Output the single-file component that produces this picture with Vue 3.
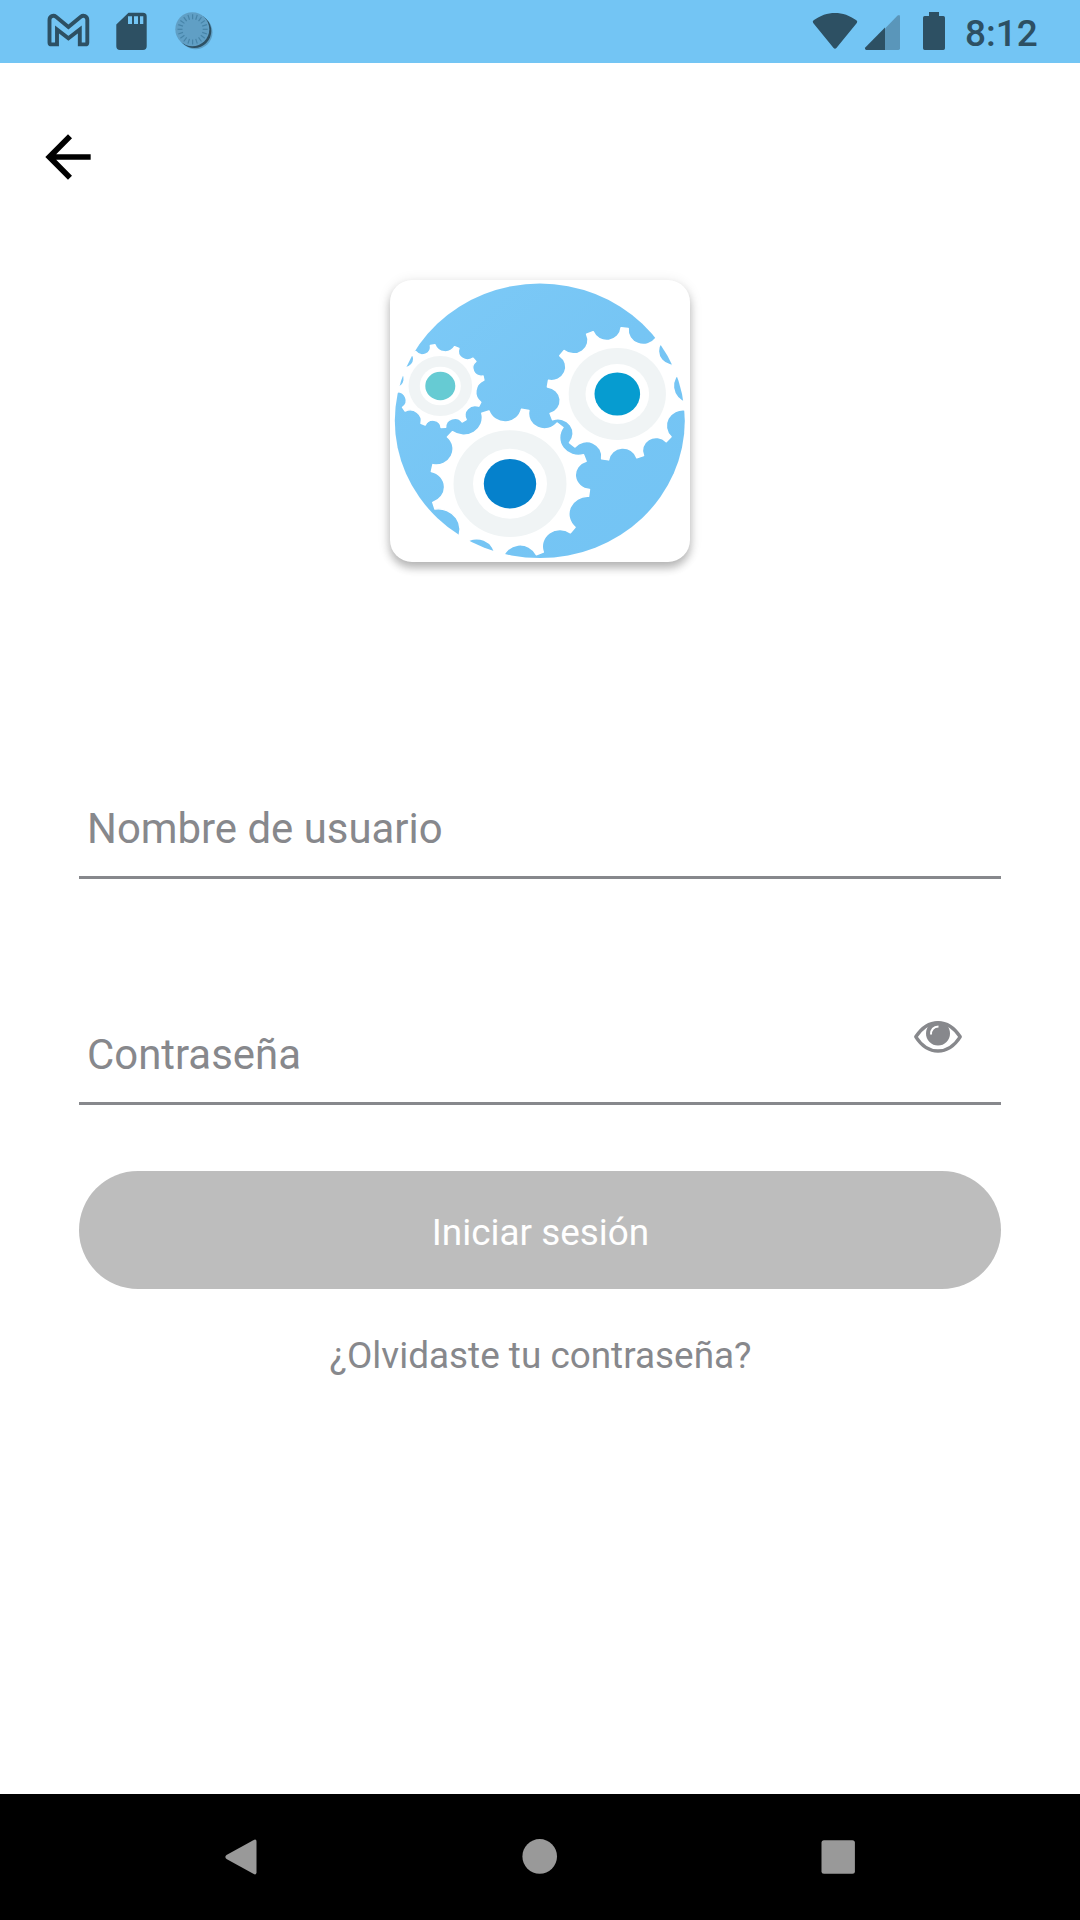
<script setup>
import { ref } from 'vue'

const username = ref('')
const password = ref('')
const showPassword = ref(false)

// Outline of a gear: flat tips at the given angles joined by concave arcs.
function gearPath(tips, radius, depth, half) {
  const at = (deg) => {
    const a = (deg * Math.PI) / 180
    return [radius * Math.cos(a), -radius * Math.sin(a)]
  }
  const sorted = [...tips].sort((a, b) => a - b)
  let d = ''
  sorted.forEach((tip, i) => {
    const next = i + 1 < sorted.length ? sorted[i + 1] : sorted[0] + 360
    const [x0, y0] = at(tip - half)
    const [x1, y1] = at(tip + half)
    const [x2, y2] = at(next - half)
    const chord = Math.hypot(x2 - x1, y2 - y1) / 2
    const r = (chord * chord + depth * depth) / (2 * depth)
    d += `${i ? 'L' : 'M'}${x0.toFixed(2)} ${y0.toFixed(2)}L${x1.toFixed(2)} ${y1.toFixed(2)}`
    d += `A${r.toFixed(2)} ${r.toFixed(2)} 0 0 1 ${x2.toFixed(2)} ${y2.toFixed(2)}`
  })
  return d + 'Z'
}

const gears = [
  {
    x: 440.3, y: 386, core: 15, hole: 20.5, ring: 31.8, color: '#66cbd3',
    path: gearPath([11, 39, 68, 100, 127, 156, 185, 214, 247, 274, 303, 334], 44, 6.5, 3),
  },
  {
    x: 617.3, y: 394, core: 22.8, hole: 31.8, ring: 48.6, color: '#069cd0',
    path: gearPath([24, 54, 84, 113, 142, 171, 200, 230, 260, 289, 317, 349], 70.3, 11.5, 2.9),
  },
  {
    x: 510, y: 483.7, core: 26.2, hole: 37, ring: 56.5, color: '#0581cc',
    path: gearPath([20, 51, 79, 108, 139, 168, 197, 231, 262, 292, 322, 353], 79.7, 12.5, 2.7),
  },
]
const ticks = Array.from({ length: 20 }, (_, i) => i * 18)
</script>

<template>
  <div class="screen">
    <header class="status">
      <svg width="230" height="63" viewBox="0 0 230 63">
        <path d="M54 44.4H51.500a2 2 0 0 1-2-2V20c0-4 4-5.200 6.500-3.200L68.400 27 80.800 16.800c2.500-2 6.500-.8 6.500 3.200v22.400a2 2 0 0 1-2 2H79.800V29.500L68.400 38.300 57 29.500V44.400z" fill="none" stroke="#2d5063" stroke-width="3.900" />
        <path d="M128.500 12.700H143a3.700 3.700 0 0 1 3.700 3.700V46.300A3.700 3.700 0 0 1 143 50H120a3.700 3.700 0 0 1-3.700-3.700V24.500zM128 16.300V24h4v-7.700zm6 0V24h4v-7.700zm6 0V24h3.300v-7.700z" fill="#2d5063" fill-rule="evenodd" />
        <circle cx="195.500" cy="32.300" r="17" fill="#568fb0" opacity=".7" />
        <circle cx="194.300" cy="31" r="17" fill="#2d5063" />
        <circle cx="192.300" cy="29.300" r="17" fill="#609fc5" />
        <path v-for="t in ticks" :key="t" d="M192.600 14.200v5" :transform="`rotate(${t} 192.600 29.300)`" stroke="#4684a8" stroke-width="1.200" />
      </svg>
      <div class="status-right">
        <svg width="150" height="63" viewBox="805 0 150 63">
          <path d="M813.600 20.300C826.500 10.400 843.500 10.400 856.400 20.300q1.500 1.200.4 2.700L836.400 48q-1.400 1.600-2.800 0L813.200 23q-1.100-1.500.4-2.700z" fill="#2d5063" />
          <path d="M885 28.500 897.600 15.600q2.400-1.800 2.400 1V48.300q0 1.700-1.700 1.700H885z" fill="#5a96ba" />
          <path d="M885 27.500V50H866.300q-2.200-.5-.8-2.700z" fill="#2d5063" />
          <path d="M929 12h10v4h4.300q1.700 0 1.700 1.700V48.300q0 1.700-1.700 1.700H924.700q-1.700 0-1.700-1.700V17.700q0-1.700 1.700-1.700H929z" fill="#2d5063" />
        </svg>
        <span class="clock">8:12</span>
      </div>
    </header>

    <main class="content">
      <button class="back" aria-label="Atrás">
        <svg width="68" height="68" viewBox="0 0 24 24">
          <path d="M20 11H7.830l5.590-5.590L12 4l-8 8 8 8 1.410-1.410L7.830 13H20z" />
        </svg>
      </button>

      <div class="logo">
        <svg width="300" height="282" viewBox="390 280 300 282">
          <defs>
            <linearGradient id="globe" x1="0" y1="0" x2="1" y2="1">
              <stop offset="0" stop-color="#7dcaf7" />
              <stop offset=".5" stop-color="#76c5f4" />
              <stop offset="1" stop-color="#73c4f4" />
            </linearGradient>
          </defs>
          <ellipse cx="539.800" cy="420.800" rx="145" ry="137.300" fill="url(#globe)" />
          <g v-for="g in gears" :key="g.color" :transform="`translate(${g.x} ${g.y}) scale(1 .945)`">
            <path :d="g.path" fill="#fff" stroke="#fff" stroke-width="1.500" stroke-linejoin="round" />
            <circle :r="g.ring" fill="#f0f4f5" />
            <circle :r="g.hole" fill="#fff" />
            <circle :r="g.core" :fill="g.color" />
          </g>
        </svg>
      </div>

      <form class="form" @submit.prevent>
        <label class="field">
          <input v-model="username" type="text" placeholder="Nombre de usuario" />
        </label>
        <label class="field second">
          <input v-model="password" :type="showPassword ? 'text' : 'password'" placeholder="Contraseña" />
          <svg class="eye" width="50" height="34" viewBox="913 1019.500 50 34" @click="showPassword = !showPassword">
            <path d="M915.800 1036.300C928 1017.500 948 1017.500 960.200 1036.300 948 1055.200 928 1055.200 915.800 1036.300z" fill="none" stroke="#87888c" stroke-width="3.400" stroke-linejoin="round" />
            <circle cx="938" cy="1033" r="12" fill="#87888c" />
            <path d="M931 1034c0-5 2.500-7.800 7.500-8" fill="none" stroke="#fff" stroke-width="2" />
          </svg>
        </label>
        <button class="submit" type="submit">Iniciar sesión</button>
        <a class="forgot">¿Olvidaste tu contraseña?</a>
      </form>
    </main>

    <nav class="nav">
      <svg width="36" height="40" viewBox="223 1837 36 40">
        <path d="M253.300 1840.200q3.200-1.700 3.200 1.500v30.600q0 3.200-3.200 1.500L226.500 1859q-2.300-2 0-4z" />
      </svg>
      <svg width="36" height="40" viewBox="521.600 1837 36 40"><circle cx="539.300" cy="1856.400" r="17.300" /></svg>
      <svg width="36" height="40" viewBox="820 1837 36 40"><rect x="821.500" y="1840.300" width="33.400" height="33.400" rx="2.500" /></svg>
    </nav>
  </div>
</template>

<style>
body { margin: 0; background: #fff; }
</style>

<style scoped>
.screen {
  width: 1080px;
  height: 1920px;
  display: flex;
  flex-direction: column;
  overflow: hidden;
  background: #fff;
  font-family: Roboto, "Liberation Sans", sans-serif;
}
button, input {
  border: 0;
  padding: 0;
  margin: 0;
  background: none;
  outline: none;
  font-family: inherit;
}
svg { display: block; flex: none; }
.status {
  height: 63px;
  flex: none;
  display: flex;
  justify-content: space-between;
  background: #73c5f4;
}
.status-right { display: flex; width: 275px; }
.clock {
  margin-left: 10px;
  font-size: 37px;
  font-weight: 500;
  line-height: 67px;
  color: #2d5063;
}
.content { flex: 1; display: flex; flex-direction: column; }
.back { width: 68px; height: 68px; margin: 60px 0 0 34px; }
.logo {
  width: 300px;
  height: 282px;
  margin: 89px auto 0;
  border-radius: 22px;
  background: #fff;
  box-shadow: 0 6px 8px rgba(0, 0, 0, .24), 0 2px 14px rgba(0, 0, 0, .11);
}
.form {
  width: 922px;
  margin: 217px auto 0;
  display: flex;
  flex-direction: column;
}
.field {
  box-sizing: border-box;
  height: 100px;
  padding: 0 38px 0 8px;
  display: flex;
  border-bottom: 3px solid #87888c;
}
.field.second { margin-top: 126px; }
.field input {
  flex: 1;
  min-width: 0;
  height: 98px;
  font-size: 41.900px;
  color: #87888c;
}
.field input::placeholder { color: #87888c; opacity: 1; }
.eye { margin-top: 15px; }
.submit {
  height: 118px;
  margin-top: 66px;
  padding: 5px 0 0 1px;
  border-radius: 59px;
  background: #bdbdbd;
  color: #fff;
  font-size: 36.900px;
}
.forgot {
  margin-top: 45px;
  padding-left: 1px;
  text-align: center;
  line-height: 44px;
  font-size: 36.900px;
  color: #87888c;
}
.nav {
  height: 126px;
  flex: none;
  box-sizing: border-box;
  padding: 43px 224px 0 223px;
  display: flex;
  justify-content: space-between;
  background: #000;
  fill: #999;
}
</style>
